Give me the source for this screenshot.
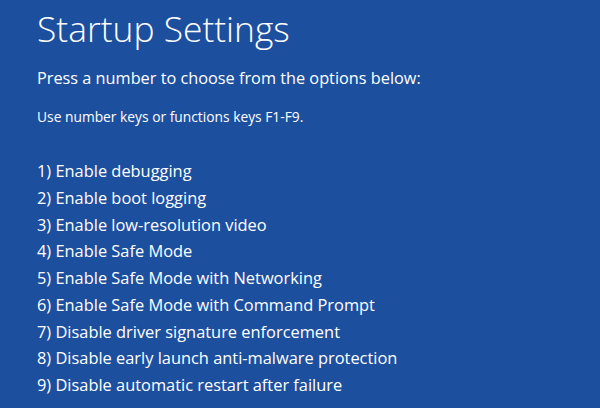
export default function App() {
  const options = [
    '1) Enable debugging',
    '2) Enable boot logging',
    '3) Enable low-resolution video',
    '4) Enable Safe Mode',
    '5) Enable Safe Mode with Networking',
    '6) Enable Safe Mode with Command Prompt',
    '7) Disable driver signature enforcement',
    '8) Disable early launch anti-malware protection',
    '9) Disable automatic restart after failure',
  ];

  return (
    <div className="h-[408px] w-[600px] overflow-hidden bg-[#1d4f9f] pl-[37px] text-white font-['Open_Sans',sans-serif]">
      <h1 className="pt-[4px] text-[35.4px] font-light leading-[48px]">Startup Settings</h1>
      <p className="mt-[14px] text-[16.3px] leading-[24px]">Press a number to choose from the options below:</p>
      <p className="mt-[17px] text-[13.8px] leading-[20px]">Use number keys or functions keys F1-F9.</p>
      <ul className="mt-[31px]">
        {options.map((o) => (
          <li key={o} className="text-[16.4px] leading-[26.75px]">{o}</li>
        ))}
      </ul>
    </div>
  );
}
